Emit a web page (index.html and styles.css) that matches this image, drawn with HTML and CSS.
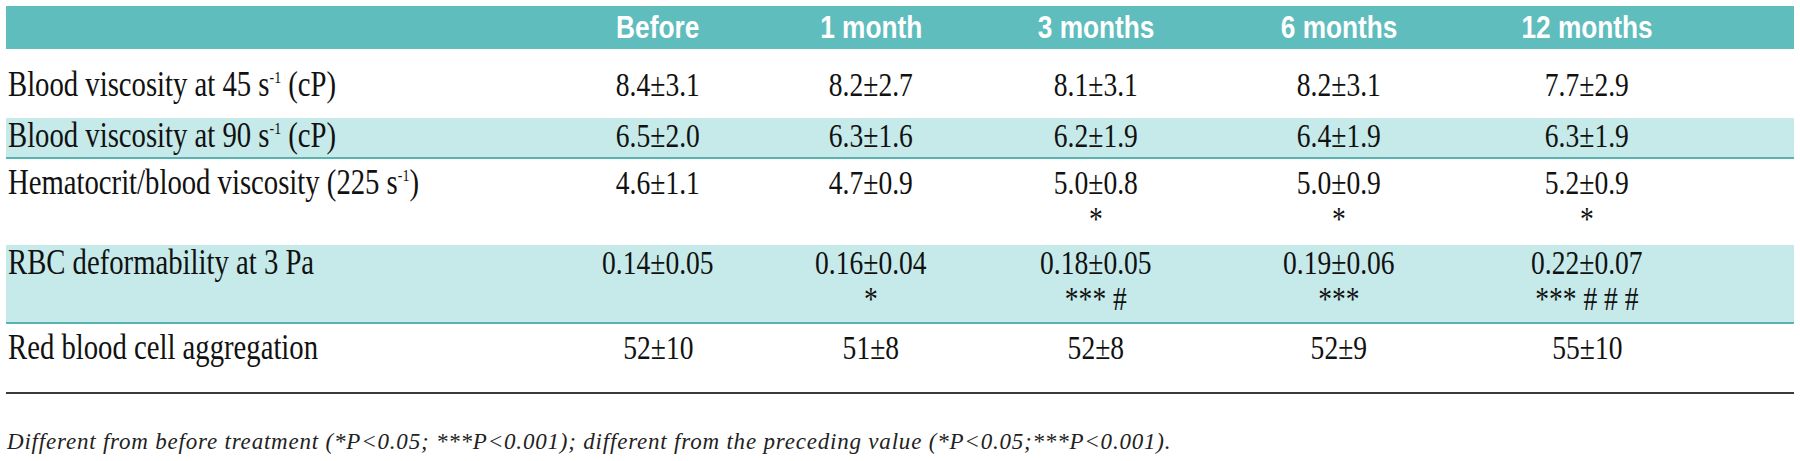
FILE: index.html
```html
<!DOCTYPE html>
<html lang="en">
<head>
<meta charset="utf-8">
<title>Blood rheology table</title>
<link rel="stylesheet" href="styles.css">
</head>
<body>
<div class="wrap">
  <div class="row head">
    <div class="cell"></div>
    <div class="cell hcell"><span class="hd">Before</span></div>
    <div class="cell hcell"><span class="hd">1 month</span></div>
    <div class="cell hcell"><span class="hd">3 months</span></div>
    <div class="cell hcell"><span class="hd">6 months</span></div>
    <div class="cell hcell"><span class="hd">12 months</span></div>
    <div class="cell"></div>
  </div>
  <div class="row r1">
    <div class="cell label"><span class="lb">Blood viscosity at 45 s<sup>-1</sup> (cP)</span></div>
    <div class="cell val"><span class="v">8.4±3.1</span></div>
    <div class="cell val"><span class="v">8.2±2.7</span></div>
    <div class="cell val"><span class="v">8.1±3.1</span></div>
    <div class="cell val"><span class="v">8.2±3.1</span></div>
    <div class="cell val"><span class="v">7.7±2.9</span></div>
    <div class="cell"></div>
  </div>
  <div class="row r2 band">
    <div class="cell label"><span class="lb">Blood viscosity at 90 s<sup>-1</sup> (cP)</span></div>
    <div class="cell val"><span class="v">6.5±2.0</span></div>
    <div class="cell val"><span class="v">6.3±1.6</span></div>
    <div class="cell val"><span class="v">6.2±1.9</span></div>
    <div class="cell val"><span class="v">6.4±1.9</span></div>
    <div class="cell val"><span class="v">6.3±1.9</span></div>
    <div class="cell"></div>
  </div>
  <div class="row r3">
    <div class="cell label"><span class="lb">Hematocrit/blood viscosity (225 s<sup>-1</sup>)</span></div>
    <div class="cell val"><span class="v">4.6±1.1</span></div>
    <div class="cell val"><span class="v">4.7±0.9</span></div>
    <div class="cell val"><span class="v">5.0±0.8<br>*</span></div>
    <div class="cell val"><span class="v">5.0±0.9<br>*</span></div>
    <div class="cell val"><span class="v">5.2±0.9<br>*</span></div>
    <div class="cell"></div>
  </div>
  <div class="row r4 band">
    <div class="cell label"><span class="lb">RBC deformability at 3 Pa</span></div>
    <div class="cell val"><span class="v">0.14±0.05</span></div>
    <div class="cell val"><span class="v">0.16±0.04<br>*</span></div>
    <div class="cell val"><span class="v">0.18±0.05<br>*** #</span></div>
    <div class="cell val"><span class="v">0.19±0.06<br>***</span></div>
    <div class="cell val"><span class="v">0.22±0.07<br>*** # # #</span></div>
    <div class="cell"></div>
  </div>
  <div class="row r5">
    <div class="cell label"><span class="lb">Red blood cell aggregation</span></div>
    <div class="cell val"><span class="v">52±10</span></div>
    <div class="cell val"><span class="v">51±8</span></div>
    <div class="cell val"><span class="v">52±8</span></div>
    <div class="cell val"><span class="v">52±9</span></div>
    <div class="cell val"><span class="v">55±10</span></div>
    <div class="cell"></div>
  </div>
  <p class="note">Different from before treatment (*P&lt;0.05; ***P&lt;0.001); different from the preceding value (*P&lt;0.05;***P&lt;0.001).</p>
</div>
</body>
</html>
```
FILE: styles.css
```css
html, body {
  margin: 0;
  padding: 0;
  background: #ffffff;
}

.wrap {
  padding: 6px 6px 0 6px;
  width: 1788px;
  font-family: "Liberation Serif", "Times New Roman", serif;
  color: #111111;
}

.row {
  display: grid;
  grid-template-columns: 546px 212px 214px 236px 250px 246px 1fr;
  box-sizing: border-box;
}

.cell {
  font-size: 34px;
  line-height: 36px;
  white-space: nowrap;
}

.head {
  height: 43px;
  background: #5fbdbd;
  align-items: center;
}

.hcell {
  text-align: center;
  color: #ffffff;
  font-family: "Liberation Sans", Arial, sans-serif;
  font-weight: 700;
  font-size: 32px;
  line-height: 43px;
}

.hd {
  display: inline-block;
  transform: scaleX(0.82);
  transform-origin: center center;
}

.band {
  background: #c6eaea;
}

.r1 {
  height: 69px;
  padding-top: 18px;
}

.r2 {
  height: 41px;
  padding-top: 0;
  border-bottom: 2px solid #58b4b2;
}

.r3 {
  height: 86px;
  padding-top: 6px;
}

.r4 {
  height: 79px;
  padding-top: 0;
  border-bottom: 2px solid #58b4b2;
}

.r5 {
  height: 70px;
  padding-top: 6px;
  border-bottom: 2px solid #3a3a3a;
}

.label {
  padding-left: 2px;
  font-size: 35px;
}

.lb {
  display: inline-block;
  transform: scaleX(0.82);
  transform-origin: left center;
}

.lb sup {
  font-size: 17px;
  line-height: 0;
  vertical-align: 13px;
}

.val {
  text-align: center;
}

.v {
  display: inline-block;
  text-align: center;
  transform: scaleX(0.81);
  transform-origin: center center;
}

.note {
  margin: 33px 0 0 1px;
  font-family: "Liberation Serif", "Times New Roman", serif;
  font-style: italic;
  font-size: 23px;
  line-height: 30px;
  letter-spacing: 0.8px;
  color: #222222;
}
```
